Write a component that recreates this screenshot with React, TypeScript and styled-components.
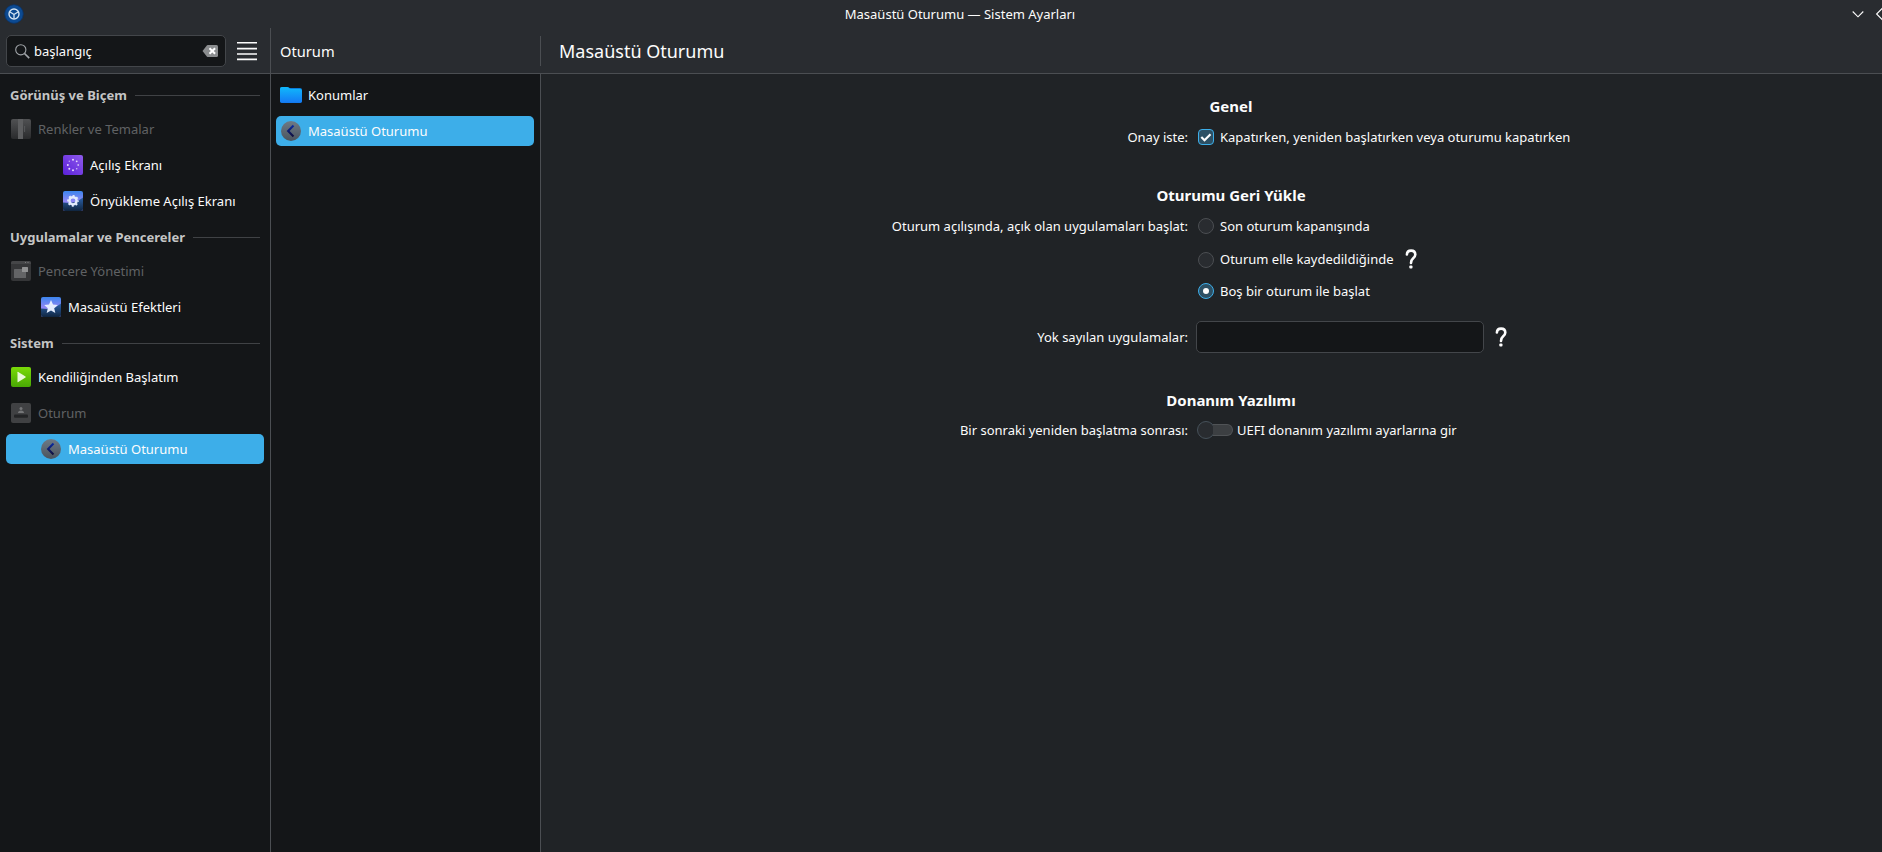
import React from 'react';
import styled, { createGlobalStyle } from 'styled-components';

const GlobalStyle = createGlobalStyle`
  * { box-sizing: border-box; }
  body {
    margin: 0;
    overflow: hidden;
    background: #141618;
    color: #fcfcfc;
    font: 13px/18px "Noto Sans", sans-serif;
  }
  svg { display: block; flex: none; }
`;

const line = '#4b4e52';

const Window = styled.div`
  height: 852px;
  display: flex;
  flex-direction: column;
  overflow: hidden;
`;

const TitleBar = styled.header`
  height: 28px;
  flex: none;
  display: flex;
  align-items: center;
  background: #292c30;
  padding-left: 4px;
`;

const WindowTitle = styled.div`
  flex: 1;
  text-align: center;
  padding-left: 44px;
`;

const WindowButtons = styled.div`
  display: flex;
  width: 30px;
`;

const Body = styled.div`
  flex: 1;
  display: flex;
  min-height: 0;
`;

const Column = styled.section<{ $grow?: boolean }>`
  display: flex;
  flex-direction: column;
  ${(p) => (p.$grow ? 'flex: 1;' : 'width: 270px; flex: none;')}
`;

const Sidebar = styled(Column)`
  width: 271px;
  border-right: 1px solid ${line};
`;

const Toolbar = styled.div`
  height: 46px;
  flex: none;
  display: flex;
  align-items: center;
  background: #292c30;
  border-bottom: 1px solid ${line};
`;

const SearchTools = styled(Toolbar)`
  padding: 0 13px 0 6px;
  justify-content: space-between;
`;

const SearchField = styled.div`
  width: 220px;
  height: 32px;
  display: flex;
  align-items: center;
  gap: 4px;
  padding: 0 6px 0 8px;
  margin-top: 1px;
  background: #141618;
  border: 1px solid #43464a;
  border-radius: 5px;
`;

const SearchText = styled.span`
  flex: 1;
`;

const ColumnTitle = styled(Toolbar)`
  padding-left: 9px;
  font-size: 14.67px;
  justify-content: space-between;
`;

const Separator = styled.div`
  width: 1px;
  height: 30px;
  background: ${line};
`;

const PageTitle = styled(Toolbar)`
  padding-left: 18px;
  font-size: 18px;
`;

const List = styled.div<{ $divided?: boolean }>`
  flex: 1;
  display: flex;
  flex-direction: column;
  padding: 3px 6px 0 ${(p) => (p.$divided ? 5 : 6)}px;
  background: #141618;
  ${(p) => p.$divided && `border-right: 1px solid ${line};`}
`;

const GroupHeader = styled.h2`
  margin: 0;
  height: 34px;
  padding: 1px 4px 0 4px;
  display: flex;
  align-items: center;
  gap: 8px;
  font-size: 13px;
  font-weight: 700;
  color: #c4c5c5;
  &::after {
    content: '';
    flex: 1;
    height: 1px;
    margin-top: 2px;
    background: #404245;
  }
`;

const ListItem = styled.div<{ $indent?: number; $selected?: boolean; $muted?: boolean }>`
  height: 30px;
  margin: 3px 0;
  padding-left: ${(p) => 5 + (p.$indent ?? 0)}px;
  display: flex;
  align-items: center;
  gap: 7px;
  border-radius: 5px;
  background: ${(p) => (p.$selected ? '#3daee9' : 'transparent')};
  color: ${(p) => (p.$muted ? '#606264' : '#fcfcfc')};
`;

const WideIcon = styled.span`
  margin: 0 -1px;
`;

const Page = styled.main`
  flex: 1;
  background: #202326;
  padding: 21px 0 0 351px;
`;

const Form = styled.div`
  width: 678px;
`;

const SectionTitle = styled.h3<{ $top?: number }>`
  margin: ${(p) => p.$top ?? 0}px 0 0;
  height: 22px;
  line-height: 22px;
  font-size: 15px;
  font-weight: 700;
  text-align: center;
`;

const Field = styled.div<{ $height: number }>`
  height: ${(p) => p.$height}px;
  display: grid;
  grid-template-columns: 296px 1fr;
  column-gap: 8px;
  align-items: center;
`;

const Label = styled.div`
  display: flex;
  justify-content: flex-end;
  white-space: nowrap;
`;

const Control = styled.div<{ $gap?: number; $inset?: number }>`
  display: flex;
  align-items: center;
  gap: ${(p) => p.$gap ?? 6}px;
  padding-left: ${(p) => p.$inset ?? 2}px;
  white-space: nowrap;
`;

const RaisedText = styled.span`
  margin-bottom: 2px;
`;

const RadioHelp = styled.span`
  margin: 0 0 2px 5px;
`;

const CheckBox = styled.span`
  width: 16px;
  height: 16px;
  display: grid;
  place-items: center;
  border: 1px solid #3daee9;
  border-radius: 4px;
  background: #2d5064;
`;

const Radio = styled.span<{ $on?: boolean }>`
  width: 16px;
  height: 16px;
  display: grid;
  place-items: center;
  border-radius: 50%;
  border: 1px solid ${(p) => (p.$on ? '#3daee9' : '#4b4e52')};
  background: ${(p) => (p.$on ? '#2d5064' : '#292c30')};
  &::after {
    content: '';
    width: 6px;
    height: 6px;
    border-radius: 50%;
    background: ${(p) => (p.$on ? '#fcfcfc' : 'transparent')};
  }
`;

const TextInput = styled.div`
  width: 288px;
  height: 32px;
  border: 1px solid #43464a;
  border-radius: 5px;
  background: #141618;
`;

const Switch = styled.span`
  width: 36px;
  height: 18px;
  display: flex;
  align-items: center;
`;

const SwitchKnob = styled.span`
  width: 18px;
  height: 18px;
  flex: none;
  border-radius: 50%;
  border: 1px solid #46515a;
  background: #292c30;
`;

const SwitchRail = styled.span`
  flex: 1;
  height: 12px;
  margin-left: -2px;
  border: 1px solid #505356;
  border-left: 0;
  border-radius: 0 6px 6px 0;
  background: #3c3f42;
`;

const AppIcon = () => (
  <svg width="20" height="20" viewBox="0 0 20 20">
    <circle cx="10" cy="10" r="9.3" fill="#0c4a92" stroke="#0a3468" strokeWidth="0.8" />
    <circle cx="10" cy="10" r="5" fill="none" stroke="#d4e4f2" strokeWidth="1.4" />
    <path d="M10 10.5v4M10 10.5L6 8M10 10.5L14 8" stroke="#d4e4f2" strokeWidth="1.3" />
  </svg>
);

const SearchIcon = () => (
  <svg width="15" height="15" viewBox="0 0 15 15" fill="none" stroke="#a0a4a8">
    <circle cx="5.8" cy="5.8" r="5.1" strokeWidth="1.1" />
    <path d="M9.5 9.5l4.7 4.7" strokeWidth="1.7" />
  </svg>
);

const ClearIcon = () => (
  <svg width="17" height="14" viewBox="0 0 17 14">
    <path d="M0.5 7L5 1.3Q5.5 1 6 1H14.5Q16 1 16 2.5V11.5Q16 13 14.5 13H6Q5.5 13 5 12.7Z" fill="#8b8d8f" />
    <path d="M7.5 4.2l5.6 5.6M13.1 4.2L7.5 9.8" stroke="#fff" strokeWidth="2" />
  </svg>
);

const MenuIcon = () => (
  <svg width="20" height="20" viewBox="0 0 20 20" fill="#fcfcfc">
    <path d="M0 1h20v1.6H0zM0 6.8h20v1.6H0zM0 12.2h20v1.6H0zM0 17.6h20v1.6H0z" />
  </svg>
);

const PaletteIcon = () => (
  <svg width="20" height="20" viewBox="0 0 20 20">
    <defs>
      <linearGradient id="pal" x1="0" y1="0" x2="0" y2="1">
        <stop stopColor="#505153" /><stop offset="1" stopColor="#2a2b2d" />
      </linearGradient>
    </defs>
    <rect width="20" height="20" rx="2" fill="url(#pal)" />
    <path d="M7 0h5v20H7z" fill="#5d5e60" />
    <path d="M13.6 7v6" stroke="#5a5b5d" strokeWidth="0.9" />
  </svg>
);

const SplashIcon = () => (
  <svg width="20" height="20" viewBox="0 0 20 20">
    <defs>
      <linearGradient id="spl" x1="0" y1="1" x2="1" y2="0">
        <stop stopColor="#5a20d8" /><stop offset="1" stopColor="#8f5bec" />
      </linearGradient>
    </defs>
    <rect width="20" height="20" rx="2" fill="url(#spl)" />
    <g fill="#e6d8fb">
      <circle cx="10" cy="4.8" r="1" /><circle cx="13.7" cy="6.3" r="0.9" />
      <circle cx="15.2" cy="10" r="0.9" opacity=".8" /><circle cx="13.7" cy="13.7" r="0.8" opacity=".8" />
      <circle cx="10" cy="15.2" r="1" /><circle cx="6.3" cy="13.7" r="1" />
      <circle cx="4.8" cy="10" r="1" /><circle cx="6.3" cy="6.3" r="0.7" opacity=".7" />
    </g>
  </svg>
);

const Landscape = ({ id, children }: { id: string; children: React.ReactNode }) => (
  <svg width="20" height="20" viewBox="0 0 20 20">
    <defs>
      <linearGradient id={id} x1="0" y1="0" x2="0" y2="1">
        <stop stopColor="#3c86ee" /><stop offset="0.5" stopColor="#8d86f4" />
      </linearGradient>
      <linearGradient id={`${id}g`} x1="0" y1="0" x2="0" y2="1">
        <stop stopColor="#2c62aa" /><stop offset="1" stopColor="#10253f" />
      </linearGradient>
    </defs>
    <rect width="20" height="20" rx="2" fill={`url(#${id})`} />
    <path d="M0 11.5l7 .5 7-1.5 6-4V18q0 2-2 2H2q-2 0-2-2z" fill={`url(#${id}g)`} />
    {children}
  </svg>
);

const BootIcon = () => (
  <Landscape id="boot">
    <circle cx="10" cy="9.8" r="3.6" fill="none" stroke="#e4ecfd" strokeWidth="2.4" />
    <circle cx="10" cy="9.8" r="5" fill="none" stroke="#e4ecfd" strokeWidth="1.7" strokeDasharray="2 1.927" strokeDashoffset="1" />
  </Landscape>
);

const EffectsIcon = () => (
  <Landscape id="fx">
    <path d="M10 3l2 4.500 4.800.500-3.600 3.200 1.100 4.700-4.300-2.500-4.300 2.500 1.100-4.700-3.600-3.200 4.800-.500z" fill="#e4ecfd" />
  </Landscape>
);

const WindowsIcon = () => (
  <svg width="20" height="20" viewBox="0 0 20 20">
    <rect width="20" height="20" rx="2" fill="#353638" />
    <path d="M0 3V2Q0 0 2 0H18Q20 0 20 2V3z" fill="#454648" />
    <path d="M14 1.5h1M16.5 1.5h1" stroke="#7a7b7c" />
    <rect x="3" y="8" width="12" height="9" rx="0.5" fill="#636466" />
    <rect x="11" y="6" width="6" height="5" rx="0.5" fill="#909192" />
  </svg>
);

const AutostartIcon = () => (
  <svg width="20" height="20" viewBox="0 0 20 20">
    <defs>
      <linearGradient id="auto" x1="0" y1="0" x2="0" y2="1">
        <stop stopColor="#7ada08" /><stop offset="1" stopColor="#48a804" />
      </linearGradient>
    </defs>
    <rect width="20" height="20" rx="2" fill="url(#auto)" />
    <path d="M6.5 5.3q0-.8.8-.4l7.2 4.6q.5.5 0 1l-7.2 4.6q-.8.4-.8-.4z" fill="#e9f8d9" />
  </svg>
);

const LoginIcon = () => (
  <svg width="20" height="20" viewBox="0 0 20 20">
    <rect width="20" height="20" rx="2" fill="#404143" />
    <circle cx="10" cy="5.5" r="1.5" fill="#757678" />
    <path d="M7 10q0-2.5 3-2.5t3 2.5z" fill="#757678" />
    <rect x="3" y="11.5" width="14" height="3.2" rx="1" fill="#232426" />
  </svg>
);

const SessionIcon = ({ id }: { id: string }) => (
  <svg width="20" height="20" viewBox="0 0 20 20">
    <defs>
      <linearGradient id={id} x1="0" y1="0" x2="0" y2="1">
        <stop stopColor="#6e7a86" /><stop offset="1" stopColor="#4a545e" />
      </linearGradient>
      <linearGradient id={`${id}c`} x1="0" y1="0" x2="0" y2="1">
        <stop stopColor="#0a2aa0" /><stop offset="1" stopColor="#100f3c" />
      </linearGradient>
    </defs>
    <circle cx="10" cy="10" r="10" fill={`url(#${id})`} />
    <path d="M12.5 4.5l-5.4 5.5 5.4 5.5" fill="none" stroke={`url(#${id}c)`} strokeWidth="2.1" />
  </svg>
);

const FolderIcon = () => (
  <svg width="22" height="16" viewBox="0 0 22 16">
    <defs>
      <linearGradient id="fold" x1="0" y1="0" x2="0" y2="1">
        <stop stopColor="#10b9fb" /><stop offset="1" stopColor="#1579f5" />
      </linearGradient>
    </defs>
    <path d="M0 2q0-2 2-2h5.5q1 0 1.5.5t1.5.5H20q2 0 2 2v11q0 2-2 2H2q-2 0-2-2z" fill="#0b7bd6" />
    <path d="M0 2q0-2 2-2h5q1 0 2 1t2 1h9q2 0 2 2v10q0 1.7-2 1.7H2q-2 0-2-1.7z" fill="url(#fold)" />
  </svg>
);

const HelpIcon = () => (
  <svg width="12" height="20" viewBox="0 0 12 20">
    <path d="M1.9 5.5Q2 1.6 6.1 1.6T10.3 5.5Q10.3 7.5 8.2 9.3Q6.2 11 6 14" fill="none" stroke="#fcfcfc" strokeWidth="2.6" strokeLinecap="round" />
    <rect x="4.3" y="16.5" width="3.2" height="3" rx="1" fill="#fcfcfc" />
  </svg>
);

const CheckIcon = () => (
  <svg width="14" height="14" viewBox="0 0 14 14">
    <path d="M2.3 7l3.2 3.2 6-6" fill="none" stroke="#fcfcfc" strokeWidth="2.2" />
  </svg>
);

const ButtonsIcon = () => (
  <svg width="30" height="14" viewBox="0 0 30 14" fill="none" stroke="#fcfcfc" strokeWidth="1.1">
    <path d="M0.7 4.5l5.3 5.3 5.3-5.3M30.5 1.1l-5.9 5.9 5.9 5.9" />
  </svg>
);

export default function App() {
  return (
    <>
      <GlobalStyle />
      <Window>
        <TitleBar>
          <AppIcon />
          <WindowTitle>Masaüstü Oturumu — Sistem Ayarları</WindowTitle>
          <WindowButtons><ButtonsIcon /></WindowButtons>
        </TitleBar>
        <Body>
          <Sidebar>
            <SearchTools>
              <SearchField>
                <SearchIcon />
                <SearchText>başlangıç</SearchText>
                <ClearIcon />
              </SearchField>
              <MenuIcon />
            </SearchTools>
            <List>
              <GroupHeader>Görünüş ve Biçem</GroupHeader>
              <ListItem $muted><PaletteIcon />Renkler ve Temalar</ListItem>
              <ListItem $indent={52}><SplashIcon />Açılış Ekranı</ListItem>
              <ListItem $indent={52}><BootIcon />Önyükleme Açılış Ekranı</ListItem>
              <GroupHeader>Uygulamalar ve Pencereler</GroupHeader>
              <ListItem $muted><WindowsIcon />Pencere Yönetimi</ListItem>
              <ListItem $indent={30}><EffectsIcon />Masaüstü Efektleri</ListItem>
              <GroupHeader>Sistem</GroupHeader>
              <ListItem><AutostartIcon />Kendiliğinden Başlatım</ListItem>
              <ListItem $muted><LoginIcon />Oturum</ListItem>
              <ListItem $indent={30} $selected><SessionIcon id="s1" />Masaüstü Oturumu</ListItem>
            </List>
          </Sidebar>
          <Column>
            <ColumnTitle>Oturum<Separator /></ColumnTitle>
            <List $divided>
              <ListItem><WideIcon><FolderIcon /></WideIcon>Konumlar</ListItem>
              <ListItem $selected><SessionIcon id="s2" />Masaüstü Oturumu</ListItem>
            </List>
          </Column>
          <Column $grow>
            <PageTitle>Masaüstü Oturumu</PageTitle>
            <Page>
              <Form>
                <SectionTitle>Genel</SectionTitle>
                <Field $height={40}>
                  <Label>Onay iste:</Label>
                  <Control><CheckBox><CheckIcon /></CheckBox>Kapatırken, yeniden başlatırken veya oturumu kapatırken</Control>
                </Field>
                <SectionTitle $top={27}>Oturumu Geri Yükle</SectionTitle>
                <Field $height={40}>
                  <Label>Oturum açılışında, açık olan uygulamaları başlat:</Label>
                  <Control><Radio />Son oturum kapanışında</Control>
                </Field>
                <Field $height={28}>
                  <span />
                  <Control>
                    <Radio />
                    <RaisedText>Oturum elle kaydedildiğinde</RaisedText>
                    <RadioHelp><HelpIcon /></RadioHelp>
                  </Control>
                </Field>
                <Field $height={34}>
                  <span />
                  <Control><Radio $on />Boş bir oturum ile başlat</Control>
                </Field>
                <Field $height={58}>
                  <Label>Yok sayılan uygulamalar:</Label>
                  <Control $gap={11} $inset={0}><TextInput /><HelpIcon /></Control>
                </Field>
                <SectionTitle $top={23}>Donanım Yazılımı</SectionTitle>
                <Field $height={38}>
                  <Label>Bir sonraki yeniden başlatma sonrası:</Label>
                  <Control $gap={4} $inset={1}>
                    <Switch><SwitchKnob /><SwitchRail /></Switch>
                    UEFI donanım yazılımı ayarlarına gir
                  </Control>
                </Field>
              </Form>
            </Page>
          </Column>
        </Body>
      </Window>
    </>
  );
}
